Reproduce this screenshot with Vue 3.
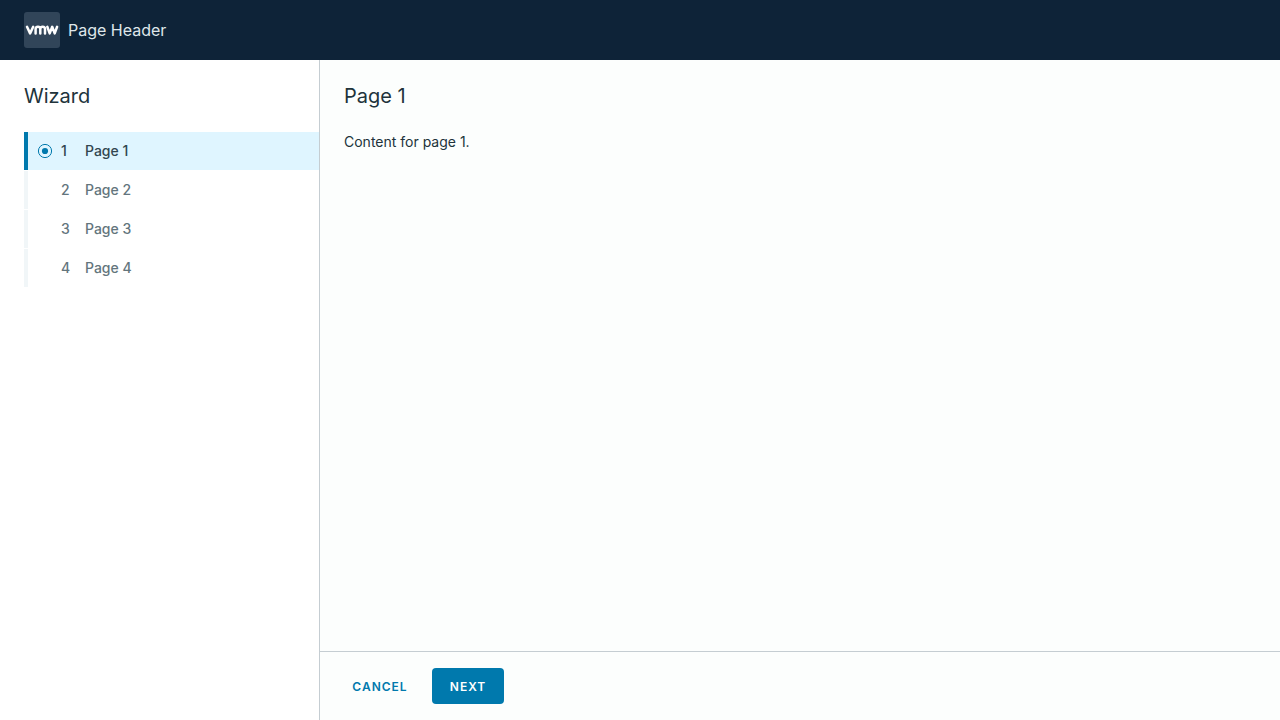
<script setup>
import { ref } from 'vue'

const steps = [1, 2, 3, 4]
const current = ref(1)
</script>

<template>
  <div class="app">
    <header class="header">
      <svg class="logo" viewBox="0 0 36 36" aria-hidden="true">
        <rect width="36" height="36" rx="3" fill="#314559" />
        <g fill="none" stroke="#fff" stroke-width="2.5" stroke-linecap="round" stroke-linejoin="round">
          <path d="M3 14.8 L6.1 21.4 L9.2 14.8" />
          <path d="M11.6 21.5 V17 Q11.6 14.7 14 14.7 Q16.3 14.7 16.3 17 V21.5 M16.3 17 Q16.3 14.7 18.7 14.7 Q21 14.7 21 17 V21.5" />
          <path d="M23.3 14.8 L25.7 21.4 L28.2 14.8 L30.7 21.4 L33.1 14.8" />
        </g>
      </svg>
      <span class="brand">Page Header</span>
    </header>
    <div class="wizard">
      <nav class="sidebar" aria-labelledby="wizard-title">
        <h1 id="wizard-title" class="title">Wizard</h1>
        <ol class="steps">
          <li v-for="n in steps" :key="n">
            <button
              type="button"
              class="step"
              :class="{ active: n === current }"
              :aria-current="n === current ? 'step' : undefined"
              @click="current = n"
            >
              <span class="mark">
                <svg v-if="n === current" viewBox="0 0 16 16" width="16" height="16" aria-hidden="true">
                  <circle cx="8" cy="8" r="6.6" fill="none" stroke="#0079ad" stroke-width="1" />
                  <circle cx="8" cy="8" r="3.1" fill="#0079ad" />
                </svg>
              </span>
              <span class="number">{{ n }}</span>
              <span>Page {{ n }}</span>
            </button>
          </li>
        </ol>
      </nav>
      <main class="main">
        <section class="body">
          <h2 class="title">Page {{ current }}</h2>
          <p class="text">Content for page {{ current }}.</p>
        </section>
        <footer class="footer">
          <button type="button" class="btn link">CANCEL</button>
          <button type="button" class="btn primary">NEXT</button>
        </footer>
      </main>
    </div>
  </div>
</template>

<style>
body {
  margin: 0;
}
</style>

<style scoped>
.app {
  display: flex;
  flex-direction: column;
  min-height: 100vh;
  font-family: Inter, "Liberation Sans", sans-serif;
  font-size: 14px;
  line-height: 24px;
  color: #21333b;
  background: #fff;
}
.header {
  display: flex;
  align-items: center;
  gap: 8px;
  height: 60px;
  padding: 0 24px;
  background: #0e2338;
}
.logo {
  width: 36px;
  height: 36px;
}
.brand {
  font-size: 16px;
  color: #dfe6ea;
}
.wizard {
  display: flex;
  flex: 1;
}
.sidebar {
  box-sizing: border-box;
  width: 25%;
  min-width: 240px;
  padding: 24px 0 24px 24px;
  border-right: 1px solid #c5cdd2;
}
.title {
  margin: 0 0 24px;
  font-size: 20px;
  line-height: 24px;
  font-weight: 400;
}
.steps {
  display: flex;
  flex-direction: column;
  gap: 1px;
  margin: 0;
  padding: 0;
  list-style: none;
}
.step {
  display: flex;
  align-items: center;
  width: 100%;
  height: 38px;
  padding: 0 8px 0 9px;
  border: 0;
  border-left: 4px solid #f1f6f8;
  background: transparent;
  color: #63757d;
  font: inherit;
  font-weight: 500;
  text-align: left;
  cursor: pointer;
}
.step.active {
  border-left-color: #0079ad;
  background: #dff5ff;
  color: #324650;
}
.mark {
  display: flex;
  width: 24px;
}
.number {
  width: 24px;
}
.main {
  display: flex;
  flex: 1;
  flex-direction: column;
  background: #fcfefd;
}
.body {
  flex: 1;
  padding: 24px;
}
.main .title {
  margin-bottom: 22px;
}
.text {
  margin: 0;
}
.footer {
  display: flex;
  gap: 16px;
  padding: 16px 24px;
  border-top: 1px solid #c5cdd2;
}
.btn {
  min-width: 72px;
  height: 36px;
  border: 0;
  border-radius: 4px;
  font-family: inherit;
  font-size: 12px;
  font-weight: 600;
  letter-spacing: 1px;
  cursor: pointer;
}
.link {
  padding: 0 8px;
  background: transparent;
  color: #0079ad;
}
.primary {
  padding: 0 16px;
  background: #0079ad;
  color: #fff;
}
</style>
